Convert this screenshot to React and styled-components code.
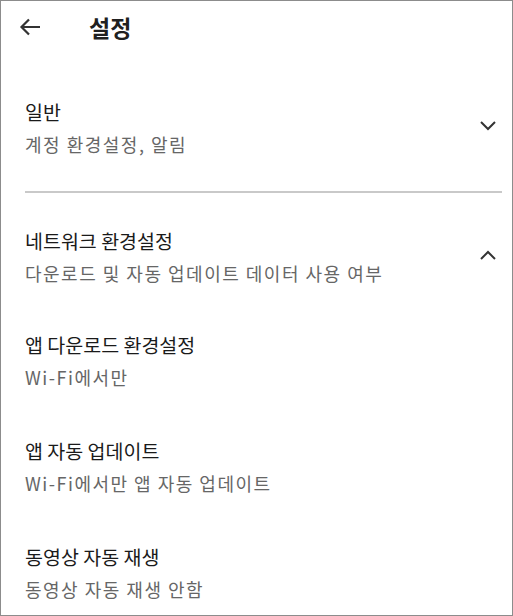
import React from "react";
import styled, { createGlobalStyle } from "styled-components";

const Global = createGlobalStyle`
  html, body { margin: 0; padding: 0; background: #fff; }
  body { font-family: "Noto Sans CJK KR", "Noto Sans", sans-serif; }
  * { box-sizing: border-box; }
`;

const Frame = styled.div`
  width: 513px;
  height: 616px;
  border: 1px solid #8c8c8c;
  background: #fff;
  overflow: hidden;
  display: flex;
  flex-direction: column;
`;

const Header = styled.header`
  height: 51px;
  display: flex;
  align-items: center;
  padding-left: 17px;
`;

const BackButton = styled.button`
  border: 0;
  background: none;
  padding: 0;
  width: 24px;
  height: 24px;
  display: flex;
  align-items: center;
  justify-content: center;
  color: #333;
`;

const Title = styled.h1`
  margin: 0 0 0 47px;
  font-size: 23px;
  font-weight: 700;
  color: #202020;
  line-height: 30px;
`;

const Section = styled.section`
  display: flex;
  align-items: center;
  padding: ${(p) => p.$pt}px 14px ${(p) => p.$pb}px 24px;
`;

const TextBlock = styled.div`
  flex: 1;
  display: flex;
  flex-direction: column;
`;

const ItemTitle = styled.div`
  font-size: 19.5px;
  line-height: 30px;
  color: #1a1a1a;
`;

const ItemSub = styled.div`
  font-size: 18px;
  line-height: 34px;
  letter-spacing: 1.5px;
  color: #666;
`;

const Chevron = styled.svg`
  width: 20px;
  height: 12px;
  margin-bottom: 7px;
  flex-shrink: 0;
`;

const Divider = styled.hr`
  margin: 0 10px 0 24px;
  border: 0;
  height: 2px;
  background: #c9c9c9;
`;

const SubList = styled.div`
  display: flex;
  flex-direction: column;
  gap: 42px;
  padding: 40px 14px 0 24px;
`;

const Item = ({ title, sub }) => (
  <TextBlock>
    <ItemTitle>{title}</ItemTitle>
    <ItemSub>{sub}</ItemSub>
  </TextBlock>
);

const ChevronIcon = ({ up }) => (
  <Chevron viewBox="0 0 20 12">
    <path
      d={up ? "M3 10 L10 3 L17 10" : "M3 2 L10 9 L17 2"}
      fill="none"
      stroke="#333"
      strokeWidth="2"
    />
  </Chevron>
);

export default function App() {
  return (
    <>
      <Global />
      <Frame>
        <Header>
          <BackButton aria-label="뒤로">
            <svg width="22" height="20" viewBox="0 0 22 20">
              <path
                d="M21 10 H3 M10 2.5 L2.5 10 L10 17.5"
                fill="none"
                stroke="#333"
                strokeWidth="2.2"
              />
            </svg>
          </BackButton>
          <Title>설정</Title>
        </Header>
        <Section $pt={45} $pb={30}>
          <Item title="일반" sub="계정 환경설정, 알림" />
          <ChevronIcon />
        </Section>
        <Divider />
        <Section $pt={33} $pb={0}>
          <Item title="네트워크 환경설정" sub="다운로드 및 자동 업데이트 데이터 사용 여부" />
          <ChevronIcon up />
        </Section>
        <SubList>
          <Item title="앱 다운로드 환경설정" sub="Wi-Fi에서만" />
          <Item title="앱 자동 업데이트" sub="Wi-Fi에서만 앱 자동 업데이트" />
          <Item title="동영상 자동 재생" sub="동영상 자동 재생 안함" />
        </SubList>
      </Frame>
    </>
  );
}
